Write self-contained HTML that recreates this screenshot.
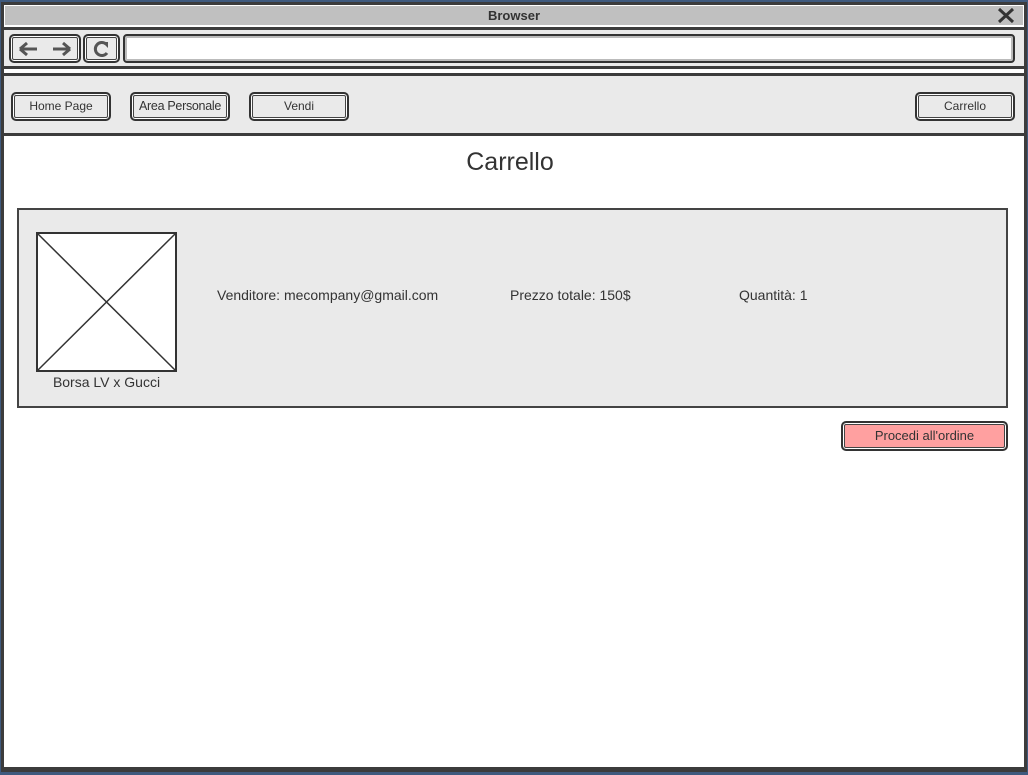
<!DOCTYPE html>
<html><head><meta charset="utf-8"><style>
*{margin:0;padding:0;box-sizing:border-box}
body{width:1028px;height:775px;background:#3f5a7e;position:relative;overflow:hidden;font-family:"Comic Sans MS","Liberation Sans",sans-serif;color:#333}
.a{position:absolute}
.btn{position:absolute;border:2px solid #333;border-radius:5px;background:#eaeaea;box-shadow:inset 0 0 0 1px #fff, inset 0 0 0 2px #444;font-size:12px;text-align:center;color:#333}
</style></head><body>
<div class="a" style="left:1px;top:2px;width:1026px;height:770px;background:#3c3c3c"></div>
<div class="a" style="left:4px;top:5px;width:1020px;height:762px;background:#fff"></div>
<div class="a" style="left:5px;top:6px;width:1018px;height:19px;background:#c0c0c0"></div>
<div class="a" style="left:0;top:8px;width:1028px;text-align:center;font-size:13px;font-weight:bold;color:#333">Browser</div>
<svg class="a" style="left:997px;top:7px" width="18" height="17"><path d="M2 2L16 15M16 2L2 15" stroke="#333" stroke-width="3"/></svg>
<div class="a" style="left:4px;top:27px;width:1020px;height:3px;background:#3c3c3c"></div>
<div class="a" style="left:4px;top:30px;width:1020px;height:36px;background:#eaeaea"></div>
<div class="btn" style="left:9px;top:34px;width:72px;height:29px"></div>
<svg class="a" style="left:17px;top:40px" width="58" height="18"><path d="M3 9H20M3 9L10 3M3 9L10 15M36 9H53M53 9L46 3M53 9L46 15" stroke="#555" stroke-width="3" fill="none"/></svg>
<div class="btn" style="left:83px;top:34px;width:37px;height:29px"></div>
<svg class="a" style="left:92px;top:39px" width="20" height="20"><path d="M14 5A6.5 6.5 0 1 0 15 14" stroke="#555" stroke-width="3" fill="none"/><path d="M10 3L16 3L16 9Z" fill="#555"/></svg>
<div class="a" style="left:123px;top:34px;width:892px;height:29px;border:2px solid #333;border-radius:4px;background:#fff;box-shadow:inset 0 0 0 2px #bbb"></div>
<div class="a" style="left:4px;top:66px;width:1020px;height:3px;background:#3c3c3c"></div>
<div class="a" style="left:4px;top:73px;width:1020px;height:3px;background:#3c3c3c"></div>
<div class="a" style="left:4px;top:76px;width:1020px;height:58px;background:#eaeaea"></div>
<div class="a" style="left:4px;top:133px;width:1020px;height:3px;background:#3c3c3c"></div>
<div class="btn" style="left:11px;top:92px;width:100px;height:29px;line-height:25px">Home Page</div>
<div class="btn" style="left:130px;top:92px;width:100px;height:29px;line-height:25px;font-size:12.5px;letter-spacing:-0.3px">Area Personale</div>
<div class="btn" style="left:249px;top:92px;width:100px;height:29px;line-height:25px">Vendi</div>
<div class="btn" style="left:915px;top:92px;width:100px;height:29px;line-height:25px">Carrello</div>
<div class="a" style="left:0;top:148px;width:1020px;text-align:center;font-size:25px">Carrello</div>
<div class="a" style="left:17px;top:208px;width:991px;height:200px;border:2px solid #444;background:#eaeaea"></div>
<svg class="a" style="left:36px;top:232px" width="141" height="140"><rect x="1" y="1" width="139" height="138" fill="#fff" stroke="#333" stroke-width="2"/><line x1="1" y1="1" x2="140" y2="139" stroke="#333" stroke-width="1.5"/><line x1="140" y1="1" x2="1" y2="139" stroke="#333" stroke-width="1.5"/></svg>
<div class="a" style="left:36px;top:374px;width:141px;text-align:center;font-size:14px">Borsa LV x Gucci</div>
<div class="a" style="left:217px;top:287px;font-size:14px">Venditore: mecompany@gmail.com</div>
<div class="a" style="left:510px;top:287px;font-size:14px">Prezzo totale: 150$</div>
<div class="a" style="left:739px;top:287px;font-size:14px">Quantità: 1</div>
<div class="btn" style="left:841px;top:421px;width:167px;height:30px;line-height:26px;background:#ffa0a0;font-size:13px">Procedi all'ordine</div>
</body></html>
